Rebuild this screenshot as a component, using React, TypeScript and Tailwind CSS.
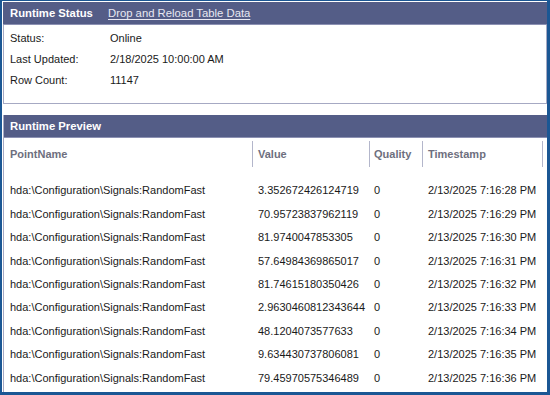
import React from 'react';

// Runtime preview rows
const rows = [
  { value: '3.352672426124719', quality: '0', time: '2/13/2025 7:16:28 PM' },
  { value: '70.95723837962119', quality: '0', time: '2/13/2025 7:16:29 PM' },
  { value: '81.9740047853305', quality: '0', time: '2/13/2025 7:16:30 PM' },
  { value: '57.64984369865017', quality: '0', time: '2/13/2025 7:16:31 PM' },
  { value: '81.74615180350426', quality: '0', time: '2/13/2025 7:16:32 PM' },
  { value: '2.9630460812343644', quality: '0', time: '2/13/2025 7:16:33 PM' },
  { value: '48.1204073577633', quality: '0', time: '2/13/2025 7:16:34 PM' },
  { value: '9.634430737806081', quality: '0', time: '2/13/2025 7:16:35 PM' },
  { value: '79.45970575346489', quality: '0', time: '2/13/2025 7:16:36 PM' },
];

const POINT = 'hda:\\Configuration\\Signals:RandomFast';

const statusItems = [
  { label: 'Status:', value: 'Online' },
  { label: 'Last Updated:', value: '2/18/2025 10:00:00 AM' },
  { label: 'Row Count:', value: '11147' },
];

const App: React.FC = () => {
  return (
    <div
      className="w-[550px] h-[395px] overflow-hidden bg-white border-t border-l-2 border-r-[3px] border-b-[3px] border-[#1b5794] pt-px pl-px text-[11px] text-[#1a1a1a]"
      style={{ fontFamily: '"Liberation Sans", Arial, sans-serif' }}
    >
      {/* Runtime Status panel */}
      <div>
        <div className="h-[23px] bg-[#545d87] border-b border-[#8c91b3] flex items-center pl-[7px] pt-px text-[11.3px]">
          <span className="font-bold text-white w-[98px] whitespace-nowrap">Runtime Status</span>
          <span className="text-[#e8e8f2] underline underline-offset-2">Drop and Reload Table Data</span>
        </div>
        <div className="h-[79px] border-x border-b border-[#a6a9c3] pt-[3px] pl-[6px]">
          {statusItems.map((s) => (
            <div key={s.label} className="h-[21px] flex items-center">
              <span className="w-[100px]">{s.label}</span>
              <span>{s.value}</span>
            </div>
          ))}
        </div>
      </div>

      {/* Runtime Preview panel */}
      <div className="mt-[11px] border-l border-[#a6a9c3] h-full">
        <div className="h-[23px] bg-[#545d87] border-b border-[#8c91b3] flex items-center pl-[6px] pt-px text-[11.3px]">
          <span className="font-bold text-white">Runtime Preview</span>
        </div>
        <div className="grid grid-cols-[249px_117px_53px_120px_1fr] h-[32px] py-[3px] text-[#6e6f7e] font-bold">
          <div className="border-r border-[#b3b6cb] pl-[6px] flex items-center">PointName</div>
          <div className="border-r border-[#b3b6cb] pl-[5px] flex items-center">Value</div>
          <div className="border-r border-[#b3b6cb] pl-[4px] flex items-center">Quality</div>
          <div className="border-r border-[#b3b6cb] pl-[5px] flex items-center">Timestamp</div>
          <div />
        </div>
        <div className="pt-[9px]">
          {rows.map((r, i) => (
            <div key={i} className="grid grid-cols-[249px_117px_53px_120px_1fr] h-[23.4px] items-center">
              <div className="pl-[6px] whitespace-nowrap">{POINT}</div>
              <div className="pl-[5px] whitespace-nowrap">{r.value}</div>
              <div className="pl-[4px]">{r.quality}</div>
              <div className="pl-[5px] whitespace-nowrap">{r.time}</div>
              <div />
            </div>
          ))}
        </div>
      </div>
    </div>
  );
};

export default App;
